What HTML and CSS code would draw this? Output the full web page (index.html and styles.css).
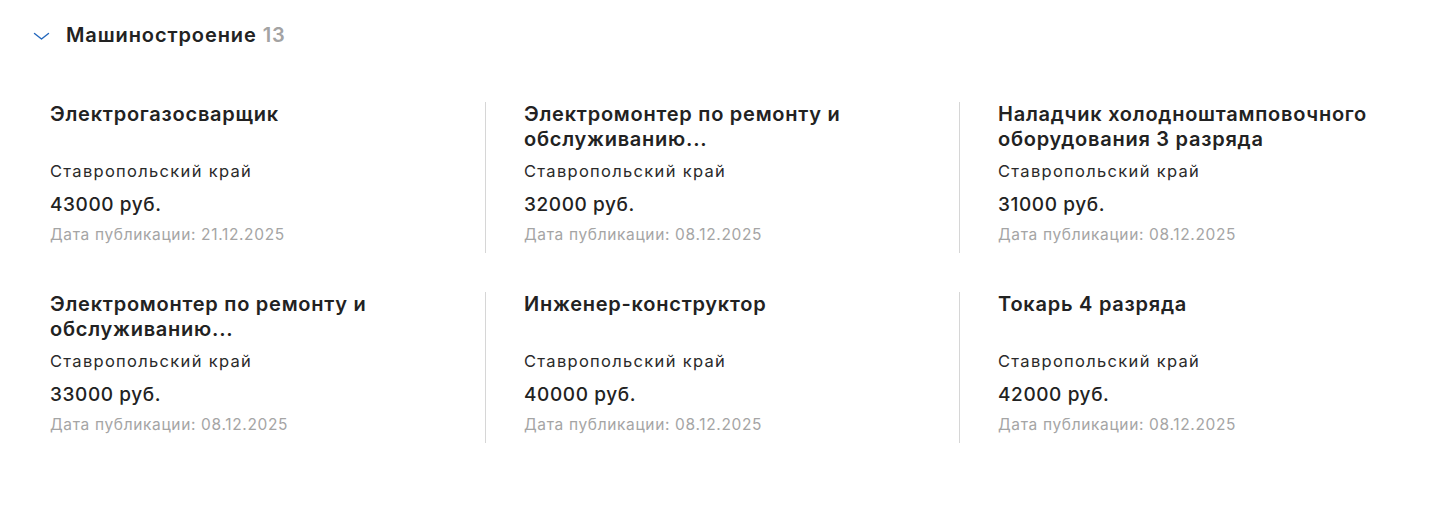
FILE: index.html
```html
<!DOCTYPE html>
<html lang="ru">
<head>
<meta charset="utf-8">
<title>Машиностроение</title>
<link rel="stylesheet" href="styles.css">
</head>
<body>
<section class="group">
  <header class="group-head">
    <svg class="chevron" width="17" height="10" viewBox="0 0 17 10" aria-hidden="true">
      <path d="M1.5 2.5 L8.5 8 L15.5 2.5" fill="none" stroke="#2468bd" stroke-width="1.4" stroke-linecap="round" stroke-linejoin="round"/>
    </svg>
    <h2 class="group-title">Машиностроение <span class="group-count">13</span></h2>
  </header>
  <div class="grid">
    <article class="card">
      <h3 class="card-title">Электрогазосварщик</h3>
      <div class="card-region">Ставропольский край</div>
      <div class="card-price">43000 руб.</div>
      <div class="card-date">Дата публикации: 21.12.2025</div>
    </article>
    <article class="card">
      <h3 class="card-title">Электромонтер по ремонту и обслуживанию...</h3>
      <div class="card-region">Ставропольский край</div>
      <div class="card-price">32000 руб.</div>
      <div class="card-date">Дата публикации: 08.12.2025</div>
    </article>
    <article class="card">
      <h3 class="card-title">Наладчик холодноштамповочного оборудования 3 разряда</h3>
      <div class="card-region">Ставропольский край</div>
      <div class="card-price">31000 руб.</div>
      <div class="card-date">Дата публикации: 08.12.2025</div>
    </article>
    <article class="card">
      <h3 class="card-title">Электромонтер по ремонту и обслуживанию...</h3>
      <div class="card-region">Ставропольский край</div>
      <div class="card-price">33000 руб.</div>
      <div class="card-date">Дата публикации: 08.12.2025</div>
    </article>
    <article class="card">
      <h3 class="card-title">Инженер-конструктор</h3>
      <div class="card-region">Ставропольский край</div>
      <div class="card-price">40000 руб.</div>
      <div class="card-date">Дата публикации: 08.12.2025</div>
    </article>
    <article class="card">
      <h3 class="card-title">Токарь 4 разряда</h3>
      <div class="card-region">Ставропольский край</div>
      <div class="card-price">42000 руб.</div>
      <div class="card-date">Дата публикации: 08.12.2025</div>
    </article>
  </div>
</section>
</body>
</html>
```

FILE: styles.css
```css
* { box-sizing: border-box; }
html, body { margin: 0; padding: 0; background: #fff; }
body {
  font-family: Inter, "Noto Sans", "DejaVu Sans", sans-serif;
  color: #222;
}
.group { padding: 23px 0 0 0; }
.group-head {
  display: flex;
  align-items: center;
  height: 24px;
  padding-left: 33px;
  gap: 16px;
}
.chevron { display: block; flex: none; margin-top: 1px; }
.group-title {
  margin: 0;
  font-size: 20px;
  font-weight: 600;
  letter-spacing: 0.9px;
  color: #222;
  line-height: 24px;
}
.group-count { color: #a3a3a3; }
.grid {
  display: grid;
  grid-template-columns: repeat(3, 474px);
  row-gap: 39px;
  margin: 55px 0 0 11px;
}
.card {
  display: flex;
  flex-direction: column;
  height: 151px;
  padding: 0 54px 0 38px;
  border-left: 1px solid #d6d6d6;
}
.card:nth-child(3n+1) { border-left-color: transparent; }
.card-title {
  margin: 0;
  height: 50px;
  flex: none;
  font-size: 20px;
  font-weight: 600;
  letter-spacing: 0.75px;
  line-height: 25px;
  color: #222;
}
.card-region {
  margin-top: 8px;
  font-size: 16.5px;
  letter-spacing: 1.3px;
  line-height: 22px;
  color: #2a2a2a;
}
.card-price {
  margin-top: 10px;
  font-size: 19px;
  font-weight: 500;
  letter-spacing: 0.6px;
  line-height: 26px;
  color: #222;
}
.card-date {
  margin-top: 7px;
  font-size: 15.5px;
  letter-spacing: 0.65px;
  line-height: 20px;
  color: #a5a5a5;
}
```
